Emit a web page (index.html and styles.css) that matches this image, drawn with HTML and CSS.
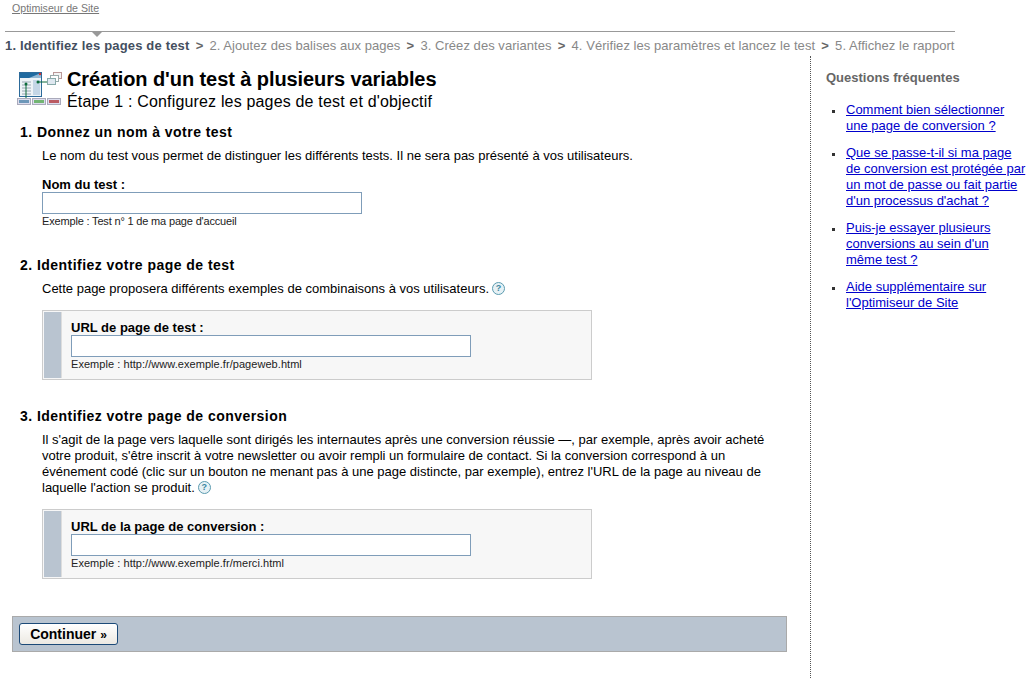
FILE: index.html
```html
<!DOCTYPE html>
<html lang="fr">
<head>
<meta charset="utf-8">
<title>Optimiseur de Site</title>
<link rel="stylesheet" href="styles.css">
</head>
<body>
<div class="topnav"><a href="#">Optimiseur de Site</a></div>
<div class="steps">
  <div class="marker"></div>
  <b>1. Identifiez les pages de test</b>
  <span class="sep">&gt;</span> <span>2. Ajoutez des balises aux pages</span>
  <span class="sep">&gt;</span> <span>3. Créez des variantes</span>
  <span class="sep">&gt;</span> <span>4. Vérifiez les paramètres et lancez le test</span>
  <span class="sep">&gt;</span> <span>5. Affichez le rapport</span>
</div>
<div class="page">
  <div class="main">
    <div class="head">
      <svg class="logo" width="48" height="36" viewBox="0 0 48 36">
        <rect x="2.5" y="1.5" width="22" height="24" fill="#eef3f7" stroke="#2c6a9a"/>
        <path d="M3 2h21v5H3z" fill="#1f6aa0"/>
        <path d="M12 7l12-5v5z" fill="#8fb6d4"/>
        <path d="M5 11h9M5 14h9M5 17h9M5 20h9M5 23h9" stroke="#9aa8b4"/>
        <path d="M16 9h7v15h-7z" fill="#c4d6e6"/>
        <circle cx="23" cy="3" r="1.2" fill="#c33"/>
        <path d="M9 13v14M21 11h9" stroke="#0c6b3a"/>
        <circle cx="9" cy="13" r="1.5" fill="#0c6b3a"/>
        <circle cx="21" cy="11" r="1.5" fill="#0c6b3a"/>
        <rect x="36.5" y="1.5" width="8" height="6" fill="#f4f4f4" stroke="#b99"/>
        <rect x="33.5" y="4.5" width="8" height="6" fill="#fff" stroke="#9aa"/>
        <rect x="30.5" y="7.5" width="8" height="6" fill="#dfe8f0" stroke="#8aa"/>
        <rect x="0.5" y="27.5" width="13" height="6" fill="#dde" stroke="#aab"/>
        <rect x="2" y="29" width="10" height="3" fill="#6d97b8"/>
        <rect x="15.5" y="27.5" width="13" height="6" fill="#dde" stroke="#aab"/>
        <rect x="17" y="29" width="10" height="3" fill="#73b573"/>
        <rect x="30.5" y="27.5" width="13" height="6" fill="#dde" stroke="#aab"/>
        <rect x="32" y="29" width="10" height="3" fill="#bb5b63"/>
      </svg>
      <div>
        <h1>Création d'un test à plusieurs variables</h1>
        <div class="subtitle">Étape 1 : Configurez les pages de test et d'objectif</div>
      </div>
    </div>

    <section class="block block-name">
      <h2>1. Donnez un nom à votre test</h2>
      <div class="indent">
        <p>Le nom du test vous permet de distinguer les différents tests. Il ne sera pas présenté à vos utilisateurs.</p>
        <label class="name-label">Nom du test :</label>
        <input class="field field-short" type="text">
        <div class="hint hint-tight">Exemple : Test n° 1 de ma page d'accueil</div>
      </div>
    </section>

    <section class="block block-test">
      <h2>2. Identifiez votre page de test</h2>
      <div class="indent">
        <p>Cette page proposera différents exemples de combinaisons à vos utilisateurs.<span class="help">?</span></p>
        <div class="urlbox">
          <div class="urlbar"></div>
          <div class="urlbody">
            <label>URL de page de test :</label>
            <input class="field" type="text">
            <div class="hint">Exemple : http://www.exemple.fr/pageweb.html</div>
          </div>
        </div>
      </div>
    </section>

    <section class="block block-conv">
      <h2>3. Identifiez votre page de conversion</h2>
      <div class="indent">
        <p>Il s'agit de la page vers laquelle sont dirigés les internautes après une conversion réussie —, par exemple, après avoir acheté votre produit, s'être inscrit à votre newsletter ou avoir rempli un formulaire de contact. Si la conversion correspond à un événement codé (clic sur un bouton ne menant pas à une page distincte, par exemple), entrez l'URL de la page au niveau de laquelle l'action se produit.<span class="help">?</span></p>
        <div class="urlbox">
          <div class="urlbar"></div>
          <div class="urlbody">
            <label>URL de la page de conversion :</label>
            <input class="field" type="text">
            <div class="hint">Exemple : http://www.exemple.fr/merci.html</div>
          </div>
        </div>
      </div>
    </section>

    <div class="actions"><button class="continue" type="button">Continuer <span class="arrows">»</span></button></div>
  </div>
  <div class="side">
    <h3>Questions fréquentes</h3>
    <ul>
      <li><a href="#">Comment bien sélectionner une page de conversion ?</a></li>
      <li><a href="#">Que se passe-t-il si ma page de conversion est protégée par un mot de passe ou fait partie d'un processus d'achat ?</a></li>
      <li><a href="#">Puis-je essayer plusieurs conversions au sein d'un même test ?</a></li>
      <li><a href="#">Aide supplémentaire sur l'Optimiseur de Site</a></li>
    </ul>
  </div>
</div>
</body>
</html>
```

FILE: styles.css
```css
html, body { overflow: hidden; }
body {
  margin: 0;
  height: 679px;
  background: #fff;
  color: #000;
  font-family: "Liberation Sans", Arial, sans-serif;
  font-size: 13px;
}
.topnav {
  padding: 2px 0 0 12px;
  height: 31px;
  box-sizing: border-box;
  font-size: 10.6px;
  line-height: 12px;
}
.topnav a { color: #777; }
.steps {
  position: relative;
  margin-left: 5px;
  width: 950px;
  height: 24px;
  border-top: 1px solid #999;
  line-height: 27px;
  color: #888;
  white-space: nowrap;
  letter-spacing: 0.05px;
}
.steps b { color: #444f60; letter-spacing: 0.17px; }
.steps .sep { color: #666; font-weight: bold; margin: 0 2.5px; }
.marker {
  position: absolute;
  left: 87px;
  top: 0;
  border: 5px solid transparent;
  border-top: 5px solid #999;
  border-bottom: 0;
}
.page { display: flex; }
.main {
  width: 811px;
  height: 624px;
  box-sizing: border-box;
  border-right: 1px dotted #555;
  padding: 12px 23px 0 12px;
}
.head { display: flex; gap: 2px; padding-left: 5px; }
.logo { margin-top: 3px; flex: none; }
h1 { margin: 0; font-size: 20px; line-height: 22px; letter-spacing: -0.08px; }
.subtitle { margin-top: 2px; font-size: 16px; line-height: 20px; letter-spacing: 0.17px; }
h2 { margin: 0 0 0 8px; font-size: 14px; line-height: 16px; letter-spacing: 0.46px; }
p { margin: 0; line-height: 16px; }
.indent { margin-left: 30px; }
.block-name { margin-top: 12px; }
.block-name p { margin-top: 8px; }
.block-test { margin-top: 30px; }
.block-test p { margin-top: 8px; }
.block-conv { margin-top: 28px; }
.block-conv p { margin-top: 8px; width: 725px; }
label { display: block; font-weight: bold; font-size: 13px; line-height: 15px; }
.name-label { margin-top: 13px; }
.field {
  display: block;
  box-sizing: border-box;
  width: 400px;
  height: 22px;
  margin: 0;
  padding: 0;
  border: 1px solid #7f9db9;
  background: #fff;
}
.field-short { width: 320px; }
.hint { font-size: 11px; line-height: 12px; margin-top: 1px; color: #222; letter-spacing: 0.05px; }
.hint-tight { letter-spacing: -0.17px; }
.urlbox {
  display: flex;
  width: 550px;
  height: 70px;
  box-sizing: border-box;
  margin-top: 13px;
  padding: 1px;
  border: 1px solid #ccc;
  background: #f7f7f7;
}
.urlbar { width: 17px; background: #b9c4d0; border-right: 1px solid #ddd; flex: none; }
.urlbody { padding: 8px 0 0 9px; }
.actions {
  margin-top: 37px;
  width: 775px;
  height: 36px;
  box-sizing: border-box;
  border: 1px solid #aaa;
  background: #b9c4d0;
  padding: 6px;
}
.continue {
  display: block;
  width: 99px;
  height: 22px;
  padding: 0;
  border: 1px solid #1c4a78;
  border-radius: 3px;
  background: linear-gradient(#fff, #ece9e2);
  font: bold 14px "Liberation Sans", Arial, sans-serif;
  color: #000;
}
.arrows { font-size: 12px; }
.side { padding: 14px 0 0 15px; flex: 1; }
h3 { margin: 0; font-size: 13px; line-height: 16px; color: #666; }
ul { margin: 16px 0 0; padding: 0 0 0 20px; list-style: none; }
li { position: relative; margin-bottom: 11px; line-height: 16px; width: 180px; }
li::before {
  content: "";
  position: absolute;
  left: -14px;
  top: 8px;
  width: 3px;
  height: 3px;
  background: #333;
}
li a { color: #00c; }
.help {
  display: inline-block;
  box-sizing: border-box;
  width: 13px;
  height: 13px;
  margin-left: 3px;
  border: 1px solid #5b9bb0;
  border-radius: 50%;
  background: #e6f1f5;
  color: #3a85a0;
  font-size: 9px;
  font-weight: bold;
  line-height: 11px;
  text-align: center;
  vertical-align: 2px;
}
```
